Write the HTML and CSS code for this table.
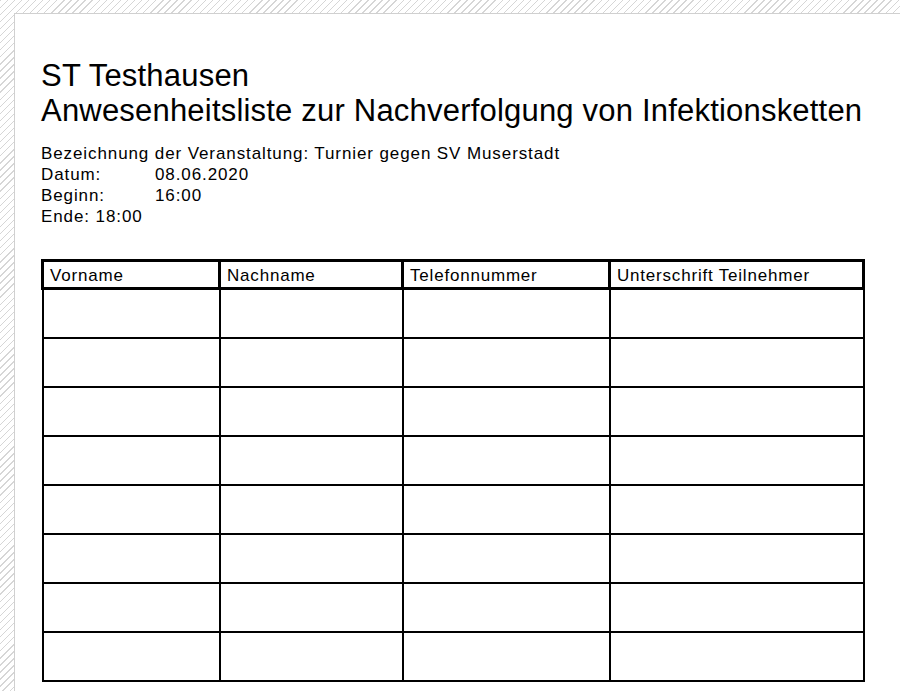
FILE: index.html
```html
<!DOCTYPE html>
<html lang="de">
<head>
    <meta charset="UTF-8">
    <title>Anwesenheitsliste</title>
    <link rel="stylesheet" href="styles.css">
</head>
<body>
    <div class="page">
        <h1 class="title">ST Testhausen<br>Anwesenheitsliste zur Nachverfolgung von Infektionsketten</h1>

        <div class="info">
            <div>Bezeichnung der Veranstaltung: Turnier gegen SV Muserstadt</div>
            <div class="row"><span class="key">Datum:</span>08.06.2020</div>
            <div class="row"><span class="key">Beginn:</span>16:00</div>
            <div>Ende: 18:00</div>
        </div>

        <table class="list">
            <colgroup>
                <col class="c1">
                <col class="c2">
                <col class="c3">
                <col class="c4">
            </colgroup>
            <thead>
                <tr>
                    <th>Vorname</th>
                    <th>Nachname</th>
                    <th>Telefonnummer</th>
                    <th>Unterschrift Teilnehmer</th>
                </tr>
            </thead>
            <tbody>
                <tr><td></td><td></td><td></td><td></td></tr>
                <tr><td></td><td></td><td></td><td></td></tr>
                <tr><td></td><td></td><td></td><td></td></tr>
                <tr><td></td><td></td><td></td><td></td></tr>
                <tr><td></td><td></td><td></td><td></td></tr>
                <tr><td></td><td></td><td></td><td></td></tr>
                <tr><td></td><td></td><td></td><td></td></tr>
                <tr><td></td><td></td><td></td><td></td></tr>
            </tbody>
        </table>
    </div>
</body>
</html>
```

FILE: styles.css
```css
html, body {
    margin: 0;
    height: 100%;
    overflow: hidden;
}

body {
    background-color: #fff;
    background-image: repeating-linear-gradient(-45deg, #fff 0, #fff 4px, #d6d6d6 4px, #d6d6d6 5px);
    font-family: "Liberation Sans", Arial, sans-serif;
    color: #000;
    padding: 13px 0 0 14px;
    box-sizing: border-box;
}

.page {
    background-color: #fff;
    border-top: 1px solid #d0d0d0;
    border-left: 1px solid #d0d0d0;
    height: 1000px;
    padding: 44px 0 0 26px;
    box-sizing: border-box;
}

.title {
    font-size: 31px;
    font-weight: normal;
    letter-spacing: 0.2px;
    line-height: 35px;
    margin: 0;
}

.info {
    font-size: 17px;
    letter-spacing: 0.9px;
    line-height: 21px;
    margin-top: 15px;
}

.info .key {
    display: inline-block;
    width: 114px;
}

/* Tabelle */
.list {
    border-collapse: collapse;
    margin-top: 32px;
    width: 821px;
    table-layout: fixed;
}

.list th {
    border: 3px solid #000;
    font-size: 17px;
    letter-spacing: 0.8px;
    font-weight: normal;
    text-align: left;
    padding: 3px 5px 0 6px;
    height: 22px;
    white-space: nowrap;
}

.list td {
    border: 2px solid #000;
    height: 47px;
    padding: 0;
}

.list .c1 { width: 177px; }
.list .c2 { width: 183px; }
.list .c3 { width: 207px; }
.list .c4 { width: 254px; }
```
